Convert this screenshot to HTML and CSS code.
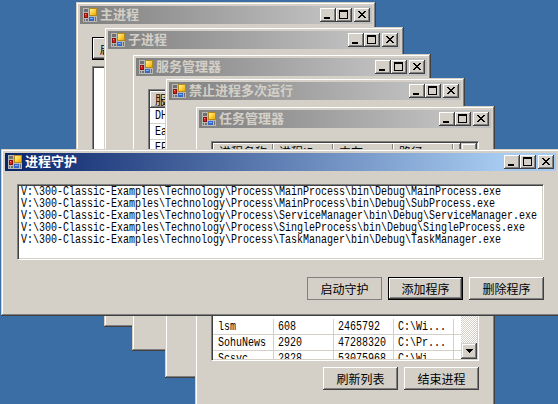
FILE: index.html
```
<!DOCTYPE html>
<html lang="zh-CN">
<head>
<meta charset="utf-8">
<title>进程守护</title>
<link rel="stylesheet" href="styles.css">
</head>
<body>
<svg class="defs" width="0" height="0">
<defs>
<linearGradient id="y" x1="0" y1="0" x2="1" y2="1"><stop offset="0" stop-color="#fff3a8"/><stop offset=".5" stop-color="#ffcf3c"/><stop offset="1" stop-color="#eaa800"/></linearGradient>
<symbol id="form" viewBox="0 0 14 14" shape-rendering="crispEdges">
<path fill="#b8b8b4" d="M0 0h14v14H0z"/>
<path class="hole" d="M1 1h4v3H1zM1 11h1v2H1zM3 11h2v2H3z"/>
<path fill="#b58a1c" d="M6 0h8v8H6z"/><path fill="url(#y)" d="M7 1h6v6H7z"/>
<path fill="#8e1010" d="M1 5h4v5H1z"/><path fill="#d8251c" d="M2 6h2v3H2z"/><path fill="#ff8a78" d="M2 6h1v1H2z"/>
<path fill="#3568c8" d="M6 9h5v4H6z"/><path fill="#82b0ff" d="M7 10h3v1H7z"/>
<path class="hole" d="M12 9h1v4h-1z"/>
</symbol>
<symbol id="min" viewBox="0 0 16 14" shape-rendering="crispEdges"><path d="M4 9h6v2H4z"/></symbol>
<symbol id="max" viewBox="0 0 16 14" shape-rendering="crispEdges"><path fill-rule="evenodd" d="M3 2h9v9H3zM4 4v6h7V4z"/></symbol>
<symbol id="close" viewBox="0 0 16 14" shape-rendering="crispEdges"><path d="M4 3h2v1H4zM10 3h2v1h-2zM5 4h2v1H5zM9 4h2v1H9zM6 5h4v1H6zM7 6h2v1H7zM6 7h4v1H6zM5 8h2v1H5zM9 8h2v1H9zM4 9h2v1H4zM10 9h2v1h-2z"/></symbol>
</defs>
</svg>
<main class="desktop">

<section class="window main-process">
<header class="title"><svg class="app"><use href="#form"/></svg><h2>主进程</h2><svg class="ctl"><use href="#min"/></svg><svg class="ctl"><use href="#max"/></svg><svg class="ctl close"><use href="#close"/></svg></header>
<div class="body"><button class="btn default">启动子进程</button><div class="sunken blank"></div></div>
</section>

<section class="window sub-process">
<header class="title"><svg class="app"><use href="#form"/></svg><h2>子进程</h2><svg class="ctl"><use href="#min"/></svg><svg class="ctl"><use href="#max"/></svg><svg class="ctl close"><use href="#close"/></svg></header>
</section>

<section class="window service">
<header class="title"><svg class="app"><use href="#form"/></svg><h2>服务管理器</h2><svg class="ctl"><use href="#min"/></svg><svg class="ctl"><use href="#max"/></svg><svg class="ctl close"><use href="#close"/></svg></header>
<div class="body"><div class="sunken services"><div class="th">服务</div><div class="line"><b>DH</b></div><div class="line"><b>Ea</b></div><div class="line"><b>EF</b></div></div></div>
</section>

<section class="window single">
<header class="title"><svg class="app"><use href="#form"/></svg><h2>禁止进程多次运行</h2><svg class="ctl"><use href="#min"/></svg><svg class="ctl"><use href="#max"/></svg><svg class="ctl close"><use href="#close"/></svg></header>
</section>

<section class="window task">
<header class="title"><svg class="app"><use href="#form"/></svg><h2>任务管理器</h2><svg class="ctl"><use href="#min"/></svg><svg class="ctl"><use href="#max"/></svg><svg class="ctl close"><use href="#close"/></svg></header>
<div class="body">
<div class="sunken processes">
<div class="table">
<div class="tr head"><span class="th">进程名称</span><span class="th">进程ID</span><span class="th">内存</span><span class="th">路径</span><span class="th"></span></div>
<div class="scrolled"></div>
<div class="tr"><span><b>lsm</b></span><span><b>608</b></span><span><b>2465792</b></span><span><b>C:\Wi...</b></span><span></span></div>
<div class="tr"><span><b>SohuNews</b></span><span><b>2920</b></span><span><b>47288320</b></span><span><b>C:\Pr...</b></span><span></span></div>
<div class="tr"><span><b>Scsvc</b></span><span><b>2828</b></span><span><b>53075968</b></span><span><b>C:\Wi...</b></span><span></span></div>
</div>
<div class="scroll"><i class="raised"></i><i class="raised"><svg width="7" height="4" shape-rendering="crispEdges"><path d="M0 0h7v1H0zM1 1h5v1H1zM2 2h3v1H2zM3 3h1v1H3z"/></svg></i></div>
</div>
<div class="actions"><button class="btn">刷新列表</button><button class="btn">结束进程</button></div>
</div>
</section>

<section class="window guard active">
<header class="title"><svg class="app"><use href="#form"/></svg><h2>进程守护</h2><svg class="ctl"><use href="#min"/></svg><svg class="ctl"><use href="#max"/></svg><svg class="ctl close"><use href="#close"/></svg></header>
<div class="body">
<ul class="sunken paths">
<li>V:\300-Classic-Examples\Technology\Process\MainProcess\bin\Debug\MainProcess.exe</li>
<li>V:\300-Classic-Examples\Technology\Process\MainProcess\bin\Debug\SubProcess.exe</li>
<li>V:\300-Classic-Examples\Technology\Process\ServiceManager\bin\Debug\ServiceManager.exe</li>
<li>V:\300-Classic-Examples\Technology\Process\SingleProcess\bin\Debug\SingleProcess.exe</li>
<li>V:\300-Classic-Examples\Technology\Process\TaskManager\bin\Debug\TaskManager.exe</li>
</ul>
<div class="actions"><button class="btn flat">启动守护</button><button class="btn default">添加程序</button><button class="btn">删除程序</button></div>
</div>
</section>
</main>
</body>
</html>
```
FILE: styles.css
```
* { box-sizing: border-box; }
body { margin: 0; overflow: hidden; color: #000; font: 10px/12px "Liberation Mono", "Noto Sans CJK SC", monospace; }
.defs { position: absolute; }
.desktop { position: relative; width: 558px; height: 404px; overflow: hidden; background: #3a6ea5; }

.window { position: absolute; width: 300px; height: 300px; padding: 4px; overflow: hidden; background: #d4d0c8;
  box-shadow: inset -1px -1px #404040, inset 1px 1px #d4d0c8, inset -2px -2px #808080, inset 2px 2px #fff; }
.main-process { left: 76px; top: 2px; }
.sub-process { left: 104px; top: 27px; }
.service { left: 132px; top: 54px; width: 299px; height: 297px; }
.single { left: 165px; top: 78px; }
.task { left: 195px; top: 106px; }
.guard { left: 1px; top: 149px; width: 559px; height: 167px; }

.title { display: flex; align-items: center; height: 18px; padding: 0 2px 0 3px; background: linear-gradient(90deg, #808080, #c0c0c0 85%); }
.active .title { background: linear-gradient(90deg, #0a246a, #a6caf0 90%); }
.title h2 { flex: 1; margin: 0 0 2px 3px; color: #d4d0c8; font: bold 13px/16px "Noto Sans CJK SC", sans-serif; white-space: nowrap; }
.active h2 { color: #fff; }
.app { width: 14px; height: 14px; }
.hole { fill: #707070; }
.active .hole { fill: #16306f; }
.ctl { width: 16px; height: 14px; background: #d4d0c8; box-shadow: inset -1px -1px #404040, inset 1px 1px #fff, inset -2px -2px #808080; }
.ctl.close { margin-left: 2px; }

.sunken { background: #fff; border: 1px solid; border-color: #808080 #fff #fff #808080; box-shadow: inset 1px 1px #404040, inset -1px -1px #d4d0c8; padding: 1px; }
.raised { background: #d4d0c8; box-shadow: inset -1px -1px #404040, inset 1px 1px #d4d0c8, inset -2px -2px #808080, inset 2px 2px #fff; }
.btn { display: block; width: 75px; height: 23px; padding: 0; border: 0; border-radius: 0; color: #000; background: #d4d0c8; font: 12px/22px "Noto Sans CJK SC", sans-serif; white-space: nowrap;
  box-shadow: inset -1px -1px #404040, inset 1px 1px #fff, inset -2px -2px #808080; }
.btn.default { border: 1px solid #000; line-height: 20px; }
.btn.flat { border: 1px solid #808080; box-shadow: none; line-height: 20px; }
.actions { display: flex; justify-content: flex-end; gap: 6px; }

.main-process .body { padding: 13px 12px; }
.blank { height: 200px; margin-top: 6px; }

.service .body { padding: 13px 12px; }
.services { height: 200px; }
.th { overflow: hidden; background: #d4d0c8; box-shadow: inset -1px -1px #404040, inset 1px 1px #fff, inset -2px -2px #808080; font: 12px/16px "Noto Sans CJK SC", sans-serif; }
.services .th { height: 17px; padding-left: 5px; line-height: 18px; }
.line { height: 16px; padding: 2px 0 0 5px; border-bottom: 1px solid #d4d0c8; }
.tr b, .line b { display: block; font-weight: normal; transform: translateY(1px) scaleY(1.2); }

.task .body { padding: 13px 12px; }
.processes { display: flex; height: 220px; overflow: hidden; }
.table { width: 248px; overflow: hidden; }
.tr { display: grid; grid-template-columns: repeat(4, 60px) 8px; height: 16px; border-bottom: 1px solid #d4d0c8; }
.tr span { height: 15px; padding: 2px 0 0 5px; border-right: 1px solid #d4d0c8; white-space: nowrap; }
.tr span:first-child { width: 61px; }
.tr span:nth-child(n+2):nth-child(-n+4) { margin-right: -1px; }
.tr span:last-child { border: 0; }
.tr .th { height: 16px; padding: 1px 0 0 6px; border: 0; }
.scrolled { height: 160px; }
.scroll { display: flex; flex-direction: column; justify-content: space-between; width: 16px; background: repeating-conic-gradient(#d4d0c8 0 25%, #fff 0 50%) 0 0 / 2px 2px; }
.scroll i { display: flex; align-items: center; justify-content: center; width: 16px; height: 16px; }
.task .actions { margin-top: 6px; }

.guard .body { padding: 13px 12px; }
.paths { height: 76px; margin: 0 0 17px; padding: 1px 3px; list-style: none; width: 527px; }
.paths li { height: 12px; white-space: pre; transform: translateY(1px) scaleY(1.2); }
.guard .actions { width: 527px; }
```
